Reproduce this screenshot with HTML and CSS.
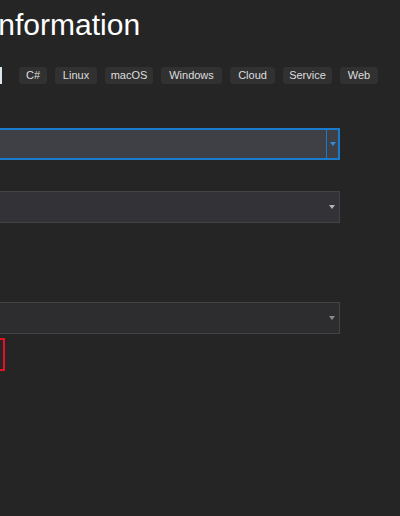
FILE: index.html
```html
<!DOCTYPE html>
<html>
<head>
<meta charset="utf-8">
<link rel="stylesheet" href="styles.css">
</head>
<body>
<div class="page">
  <h1 class="title">Information</h1>
  <div class="tags">
    <span class="tag-edge"></span>
    <span class="tag tag-csharp">C#</span>
    <span class="tag tag-linux">Linux</span>
    <span class="tag tag-macos">macOS</span>
    <span class="tag tag-windows">Windows</span>
    <span class="tag tag-cloud">Cloud</span>
    <span class="tag tag-service">Service</span>
    <span class="tag tag-web">Web</span>
  </div>
  <div class="select select-focus">
    <span class="select-btn"><span class="arrow"></span></span>
  </div>
  <div class="select select-normal">
    <span class="select-btn"><span class="arrow"></span></span>
  </div>
  <div class="select select-dim">
    <span class="select-btn"><span class="arrow"></span></span>
  </div>
  <div class="error-box"></div>
</div>
</body>
</html>
```

FILE: styles.css
```css
html, body {
  margin: 0;
  padding: 0;
  background: #252526;
  overflow: hidden;
}
body {
  font-family: "Liberation Sans", "Open Sans", sans-serif;
  color: #f1f1f1;
}
.page {
  width: 340px;
}
.title {
  margin: 0 0 0 -10px;
  padding-top: 6px;
  height: 40px;
  box-sizing: border-box;
  font-size: 30px;
  line-height: 38px;
  font-weight: 400;
  color: #ffffff;
  white-space: nowrap;
}
.tags {
  display: flex;
  align-items: center;
  gap: 8px;
  margin-top: 27px;
  height: 17px;
}
.tag-edge {
  flex: none;
  width: 2px;
  height: 17px;
  background: #dbe7ef;
  margin-right: 9px;
}
.tag {
  flex: none;
  box-sizing: border-box;
  height: 17px;
  line-height: 17px;
  padding: 0;
  text-align: center;
  border-radius: 3px;
  background: #313132;
  color: #dedede;
  font-size: 11px;
  white-space: nowrap;
}
.tag-csharp { width: 28px; }
.tag-linux { width: 42px; }
.tag-macos { width: 48px; }
.tag-windows { width: 61px; }
.tag-cloud { width: 45px; }
.tag-service { width: 49px; }
.tag-web { width: 38px; }
.select {
  margin-left: -20px;
  width: 360px;
  height: 32px;
  box-sizing: border-box;
  display: flex;
  justify-content: flex-end;
  align-items: stretch;
}
.select-btn {
  width: 12px;
  display: flex;
  align-items: center;
  justify-content: center;
}
.arrow {
  width: 0;
  height: 0;
  border-left: 3px solid transparent;
  border-right: 3px solid transparent;
  border-top: 4px solid #999999;
}
.select-focus {
  margin-top: 44px;
  background: #3f3f46;
  border: 2px solid #1a7acc;
}
.select-focus .select-btn {
  width: 11px;
  border-left: 1px solid #1a7acc;
}
.select-focus .arrow {
  border-top-color: #2d8ee0;
}
.select-normal {
  margin-top: 31px;
  background: #333337;
  border: 1px solid #434346;
}
.select-normal .select-btn {
  width: 13px;
  margin-right: 1px;
}
.select-normal .arrow {
  border-top-color: #b4b4b4;
}
.select-dim {
  margin-top: 79px;
  background: #2d2d30;
  border: 1px solid #434346;
}
.select-dim .select-btn {
  width: 13px;
  margin-right: 1px;
}
.select-dim .arrow {
  border-top-color: #8a8a8a;
}
.error-box {
  margin-top: 4px;
  margin-left: -40px;
  width: 45px;
  height: 33px;
  box-sizing: border-box;
  border: 2px solid #e51123;
}
```
